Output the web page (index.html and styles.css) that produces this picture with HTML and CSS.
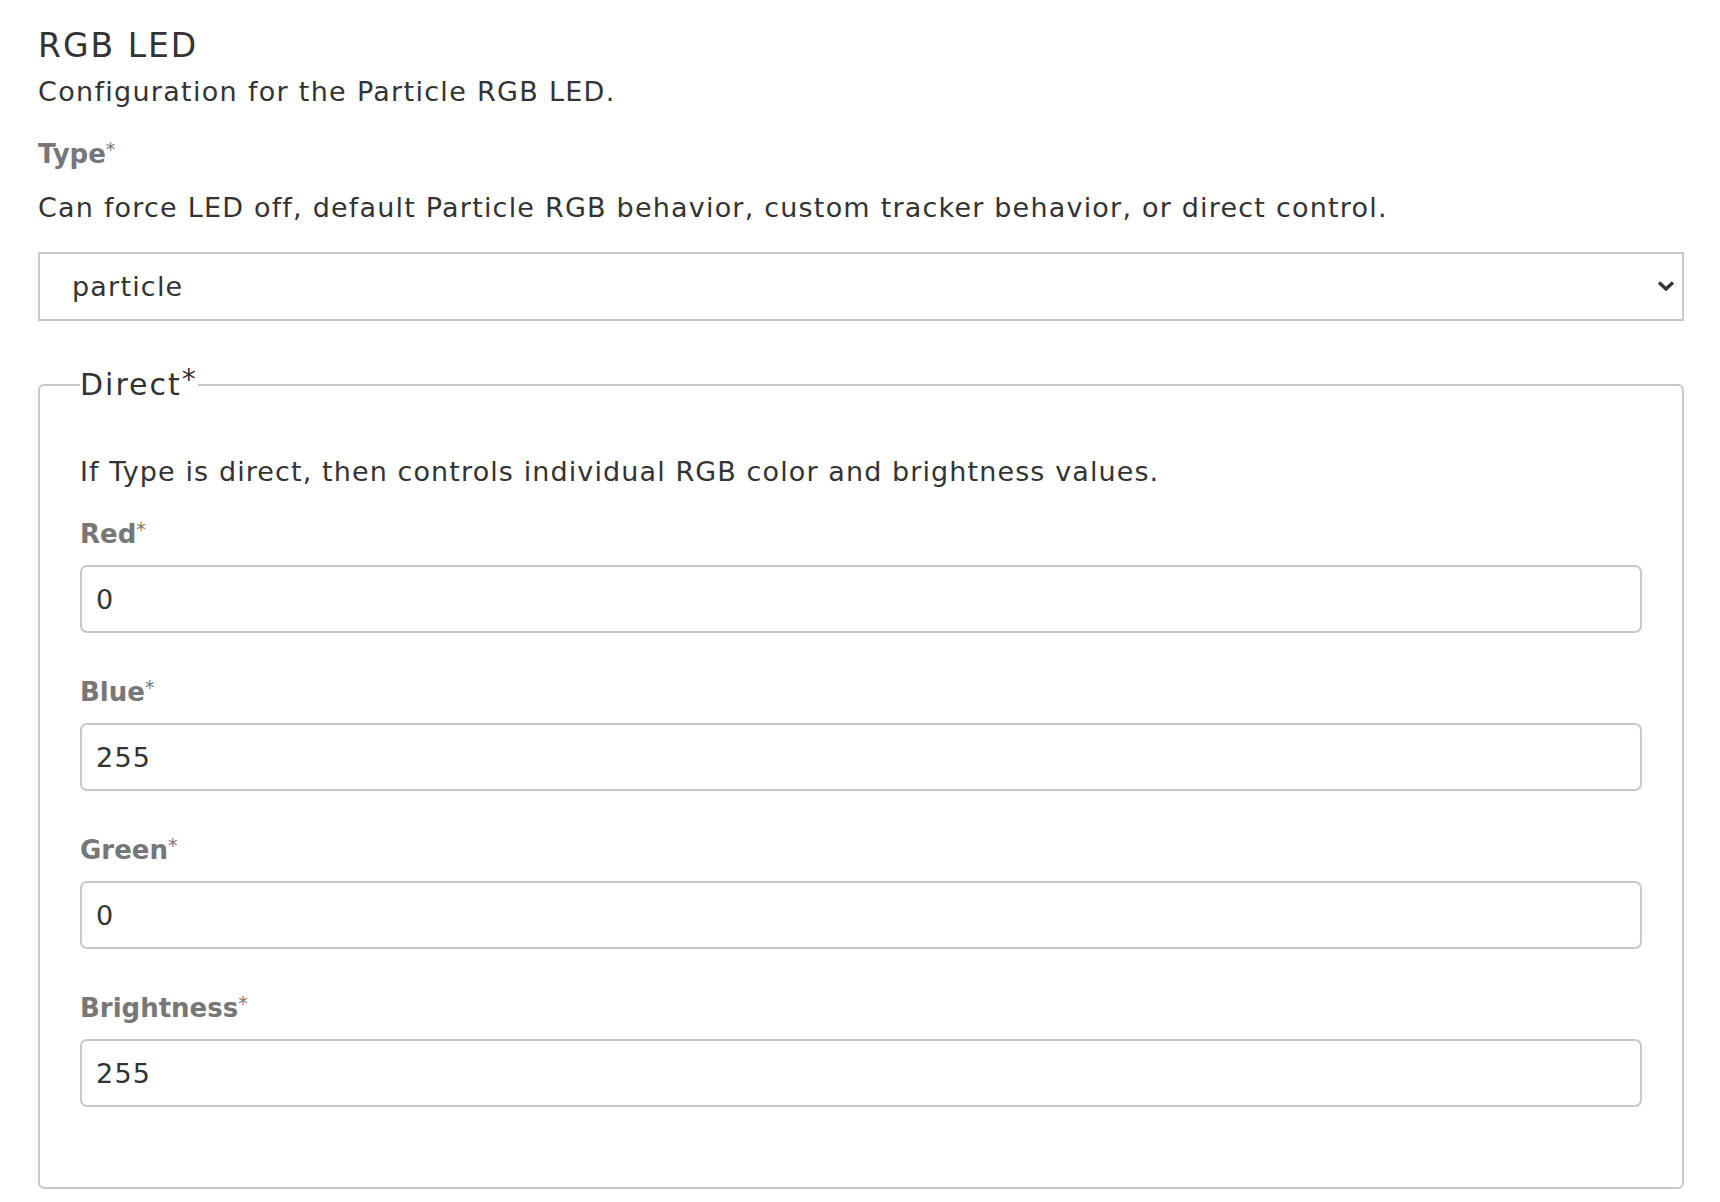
FILE: index.html
```html
<!DOCTYPE html>
<html>
<head>
<meta charset="utf-8">
<link rel="stylesheet" href="styles.css">
</head>
<body>
<div class="page">
  <h3 class="title">RGB LED</h3>
  <p class="desc">Configuration for the Particle RGB LED.</p>
  <label class="label type-label">Type<span class="req">*</span></label>
  <p class="help">Can force LED off, default Particle RGB behavior, custom tracker behavior, or direct control.</p>
  <div class="select-wrap">
    <select class="select">
      <option>particle</option>
    </select>
    <svg class="chev" width="18" height="12" viewBox="0 0 18 12"><path d="M2 2.5 L9 9 L16 2.5" fill="none" stroke="#333" stroke-width="3.4"/></svg>
  </div>
  <fieldset class="group">
    <legend class="legend">Direct<span class="req">*</span></legend>
    <p class="help group-help">If Type is direct, then controls individual RGB color and brightness values.</p>
    <div class="field">
      <label class="label">Red<span class="req">*</span></label>
      <input class="input" type="text" value="0">
    </div>
    <div class="field">
      <label class="label">Blue<span class="req">*</span></label>
      <input class="input" type="text" value="255">
    </div>
    <div class="field">
      <label class="label">Green<span class="req">*</span></label>
      <input class="input" type="text" value="0">
    </div>
    <div class="field">
      <label class="label">Brightness<span class="req">*</span></label>
      <input class="input" type="text" value="255">
    </div>
  </fieldset>
</div>
</body>
</html>
```
FILE: styles.css
```css
html, body {
  margin: 0;
  padding: 0;
  background: #ffffff;
}
body {
  font-family: "DejaVu Sans", "Open Sans", sans-serif;
  color: #333333;
}
.page {
  padding: 26px 36px 0 38px;
}
.title {
  margin: 0;
  font-size: 33px;
  line-height: 40px;
  font-weight: 400;
  color: #333;
  letter-spacing: 2px;
}
.desc {
  margin: 8px 0 0;
  font-size: 27px;
  line-height: 36px;
  letter-spacing: 1.3px;
}
.label {
  display: block;
  font-size: 26px;
  line-height: 36px;
  font-weight: 700;
  color: #777;
}
.req {
  font-weight: 400;
  font-size: 19px;
  vertical-align: 7px;
  line-height: 0;
}
.type-label {
  margin-top: 26px;
}
.help {
  margin: 18px 0 0;
  font-size: 27px;
  line-height: 36px;
  letter-spacing: 1.2px;
}
.select-wrap {
  position: relative;
  margin-top: 26px;
}
.select {
  display: block;
  width: 100%;
  height: 69px;
  box-sizing: border-box;
  -webkit-appearance: none;
  appearance: none;
  border: 2px solid #c8c8c8;
  border-radius: 0;
  background: #fff;
  padding: 0 60px 0 32px;
  font-family: inherit;
  font-size: 27px;
  letter-spacing: 1.2px;
  color: #333;
}
.chev {
  position: absolute;
  right: 9px;
  top: 28px;
}
.group {
  margin: 44px 0 0;
  border: 2px solid #c8c8c8;
  border-radius: 6px;
  padding: 0 40px 80px 40px;
  min-width: 0;
}
.legend {
  padding: 0;
  margin-left: 0;
  font-size: 30px;
  line-height: 40px;
  color: #333;
  letter-spacing: 2px;
}
.legend .req {
  font-size: 28px;
  vertical-align: 6px;
}
.group-help {
  margin-top: 49px;
  letter-spacing: 1.1px;
}
.field {
  margin-top: 26px;
}
.field + .field {
  margin-top: 41px;
}
.input {
  display: block;
  width: 100%;
  box-sizing: border-box;
  height: 68px;
  margin-top: 13px;
  border: 2px solid #c8c8c8;
  border-radius: 7px;
  padding: 0 14px;
  font-family: inherit;
  font-size: 27px;
  letter-spacing: 1.2px;
  color: #333;
  background: #fff;
  outline: none;
}
```
